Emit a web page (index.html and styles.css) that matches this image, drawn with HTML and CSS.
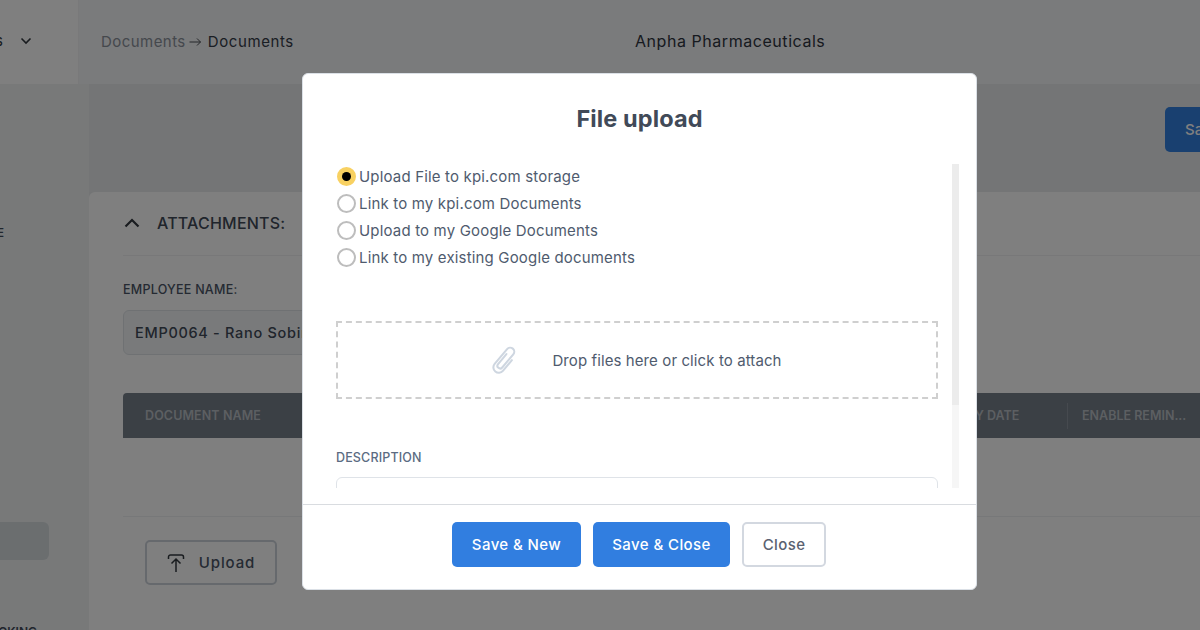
FILE: index.html
```html
<!DOCTYPE html>
<html lang="en">
<head>
<meta charset="utf-8">
<title>File upload</title>
<link rel="stylesheet" href="styles.css">
</head>
<body>
<div class="app">
  <header class="topbar">
    <div class="menu-cell"><span class="menu-text">Documents</span>
      <svg class="chev" width="12" height="8" viewBox="0 0 12 8"><path d="M1.500 1.500 6 6l4.500-4.500" fill="none" stroke="#33383f" stroke-width="1.600"/></svg>
    </div>
    <div class="crumbs"><span class="crumb-muted">Documents</span>
      <svg class="crumb-arrow" width="13" height="10" viewBox="0 0 13 10"><path d="M0.500 5h11M8 1.500 11.500 5 8 8.500" fill="none" stroke="#4a4e55" stroke-width="1"/></svg>
      <span class="crumb-current">Documents</span></div>
    <div class="company">Anpha Pharmaceuticals</div>
  </header>
  <div class="body">
    <aside class="sidebar">
      <div class="side-label side-e">DOCUMENTS TYPE</div>
      <div class="side-btn"></div>
      <div class="side-label side-king">TRACKING</div>
    </aside>
    <main class="main">
      <div class="toolbar"><button class="save-top">Save</button></div>
      <section class="card">
        <div class="card-head">
          <svg width="16" height="10" viewBox="0 0 16 10"><path d="M1.500 8.500 8 2l6.500 6.500" fill="none" stroke="#33383f" stroke-width="2.200"/></svg>
          <span>ATTACHMENTS:</span>
        </div>
        <div class="field-label">EMPLOYEE NAME:</div>
        <div class="emp-input">EMP0064 - Rano Sobirova</div>
        <div class="table-head">
          <div class="th th-name">DOCUMENT NAME</div>
          <div class="th th-date">EXPIRY DATE</div>
          <div class="th th-rem">ENABLE REMIN...</div>
        </div>
        <div class="table-empty"></div>
        <div class="card-foot">
          <button class="upload-btn">
            <svg width="18" height="20" viewBox="0 0 18 20"><path d="M1.500 6V4a2 2 0 0 1 2-2h11a2 2 0 0 1 2 2v2M9 19V6M4.500 10.500 9 6l4.500 4.500" fill="none" stroke="#33383f" stroke-width="1.500"/></svg>
            <span>Upload</span>
          </button>
        </div>
      </section>
    </main>
  </div>
  <div class="overlay"></div>
  <div class="modal">
    <h1 class="modal-title">File upload</h1>
    <div class="modal-body">
      <div class="modal-scroll">
        <div class="radios">
          <label class="radio-row"><span class="radio radio-on"><span class="radio-dot"></span></span>Upload File to kpi.com storage</label>
          <label class="radio-row"><span class="radio"></span>Link to my kpi.com Documents</label>
          <label class="radio-row"><span class="radio"></span>Upload to my Google Documents</label>
          <label class="radio-row"><span class="radio"></span>Link to my existing Google documents</label>
        </div>
        <div class="dropzone">
          <svg class="clip" width="26" height="28" viewBox="-12 -13 24 26"><path transform="rotate(40)" d="M-2.500-5V7a2.500 2.500 0 0 0 5 0V-9a3.750 3.750 0 0 0-7.500 0V9a5 5 0 0 0 10 0V-4" fill="none" stroke="#ced6e0" stroke-width="1.900" stroke-linecap="round"/></svg>
          <span>Drop files here or click to attach</span>
        </div>
        <div class="desc-label">DESCRIPTION</div>
        <div class="desc-box"></div>
      </div>
      <div class="scrollbar"><div class="scroll-thumb"></div></div>
    </div>
    <footer class="modal-foot">
      <button class="btn btn-primary btn-new">Save &amp; New</button>
      <button class="btn btn-primary btn-close">Save &amp; Close</button>
      <button class="btn btn-ghost">Close</button>
    </footer>
  </div>
</div>
</body>
</html>
```

FILE: styles.css
```css
* { box-sizing: border-box; }
html, body { margin: 0; padding: 0; }
body { font-family: Inter, "Noto Sans", sans-serif; background: #f7f8f9; }
button { font-family: inherit; cursor: pointer; }

.app { position: relative; width: 1200px; height: 630px; overflow: hidden; display: flex; flex-direction: column; background: #e6e8ea; }

.topbar { height: 84px; flex: none; display: flex; align-items: center; background: #f5f6f8; position: relative; }
.menu-cell { width: 79px; height: 100%; flex: none; display: flex; align-items: center; justify-content: flex-end; gap: 17px; padding: 0 46px 3px 0; overflow: hidden; white-space: nowrap; background: #ffffff; border-right: 1px solid #f2f3f5; font-size: 15px; color: #33383f; }
.menu-text { flex: none; }
.chev { flex: none; }
.crumbs { margin-left: 22px; padding-bottom: 1px; display: flex; align-items: center; gap: 3px; font-size: 15px; letter-spacing: 0.450px; }
.crumb-muted { color: #8b919b; }
.crumb-current { color: #343c49; margin-left: 3px; letter-spacing: 0.600px; }
.crumb-arrow { flex: none; }
.company { position: absolute; left: 635px; top: 31px; font-size: 16px; color: #2e3540; letter-spacing: 0.550px; }

.body { flex: 1; display: flex; min-height: 0; }
.sidebar { width: 89px; flex: none; position: relative; overflow: hidden; background: #f0f2f3; }
.side-label { font-size: 12px; font-weight: 600; color: #414a58; white-space: nowrap; }
.side-e { position: absolute; right: 85px; top: 141px; }
.side-btn { position: absolute; left: -40px; top: 438px; width: 89px; height: 38px; border-radius: 6px; background: #d6dcdf; }
.side-king { position: absolute; right: 52px; top: 540px; }

.main { flex: 1; min-width: 0; display: flex; flex-direction: column; }
.toolbar { height: 108px; flex: none; background: #e9ebed; padding: 23px 0 0 1076px; overflow: hidden; }
.save-top { width: 100px; height: 45px; border: 0; border-radius: 5px; background: #3280e0; color: #fff; font-size: 15px; font-weight: 500; text-align: left; padding-left: 20px; }

.card { flex: 1; background: #ffffff; border-radius: 6px 0 0 0; padding: 0 0 0 34px; overflow: hidden; }
.card-head { height: 64px; display: flex; align-items: center; gap: 17px; padding: 0 0 2px 1px; border-bottom: 1px solid #f0f1f3; color: #414a58; font-size: 16px; font-weight: 500; letter-spacing: 0.200px; }
.field-label { margin-top: 26px; font-size: 12.500px; font-weight: 500; color: #4a5566; line-height: 15px; letter-spacing: 0.250px; }
.emp-input { margin-top: 13px; width: 300px; height: 45px; border: 1px solid #dfe3e7; border-radius: 6px; background: #f3f5f7; padding-left: 11px; line-height: 43px; font-size: 14.500px; font-weight: 500; color: #414a58; white-space: nowrap; overflow: hidden; letter-spacing: 0.700px; }
.table-head { margin-top: 38px; height: 45px; width: 1100px; display: flex; align-items: center; background: #76808b; color: #b9bec4; font-size: 12.500px; font-weight: 600; border-radius: 4px 0 0 0; position: relative; }
.th { white-space: nowrap; }
.th-name { margin-left: 22px; letter-spacing: 0.100px; }
.th-date { position: absolute; left: 816px; }
.th-rem { position: absolute; left: 944px; border-left: 1px solid #8d959e; padding-left: 14px; line-height: 26px; }
.table-empty { height: 79px; border-bottom: 1px solid #eef0f2; width: 1100px; }
.card-foot { padding: 23px 0 0 22px; }
.upload-btn { width: 132px; height: 45px; display: flex; align-items: center; justify-content: center; gap: 14px; border: 2px solid #cdd3da; border-radius: 5px; background: #ffffff; color: #4a5566; font-size: 15px; font-weight: 500; letter-spacing: 0.900px; padding: 0; }

.overlay { position: absolute; inset: 0; background: rgba(0, 0, 0, 0.5); }

.modal { position: absolute; left: 302px; top: 73px; width: 675px; height: 517px; background: #ffffff; border: 1px solid #dbe0e6; border-radius: 6px; display: flex; flex-direction: column; }
.modal-title { margin: 0; height: 90px; padding-top: 30px; text-align: center; font-size: 23.500px; line-height: 30px; font-weight: 700; color: #414a58; letter-spacing: 0.100px; }
.modal-body { height: 340px; flex: none; position: relative; overflow: hidden; padding-left: 33px; }
.modal-scroll { width: 602px; height: 324px; overflow: hidden; }
.radios { display: flex; flex-direction: column; padding: 0 0 0 1px; margin-top: -1px; }
.radio-row { height: 27px; display: flex; align-items: center; gap: 3px; font-size: 15px; color: #4f5b6e; letter-spacing: 0.170px; }
.radio { width: 19px; height: 19px; flex: none; border: 2px solid #bdbdbd; border-radius: 50%; background: #fff; display: flex; align-items: center; justify-content: center; }
.radio-on { background: #f8d162; border-color: #f8d162; }
.radio-dot { width: 9px; height: 9px; border-radius: 50%; background: #000; }
.dropzone { margin-top: 50px; height: 78px; border: 2px dashed #cfcfcf; display: flex; align-items: center; justify-content: center; gap: 34px; font-size: 15px; color: #4f5b6e; letter-spacing: 0.100px; }
.clip { flex: none; }
.desc-label { margin-top: 51px; font-size: 12.500px; line-height: 16px; font-weight: 500; color: #5b6b82; letter-spacing: 0.150px; }
.desc-box { margin-top: 11px; height: 60px; border: 1px solid #dfe3e8; border-radius: 6px; }
.scrollbar { position: absolute; left: 649px; top: 0; width: 7px; height: 324px; background: #f6f6f6; }
.scroll-thumb { height: 241px; background: #ececec; }

.modal-foot { flex: 1; border-top: 1px solid #d9dce0; display: flex; align-items: flex-start; gap: 12px; padding: 17px 0 0 149px; }
.btn { height: 45px; border-radius: 5px; font-size: 15px; font-weight: 500; letter-spacing: 0.400px; padding: 0; }
.btn-primary { border: 0; background: #317ee0; color: #fff; }
.btn-new { width: 129px; }
.btn-close { width: 137px; }
.btn-ghost { width: 84px; border: 2px solid #d3d8e0; background: #fff; color: #5a6270; }
```
